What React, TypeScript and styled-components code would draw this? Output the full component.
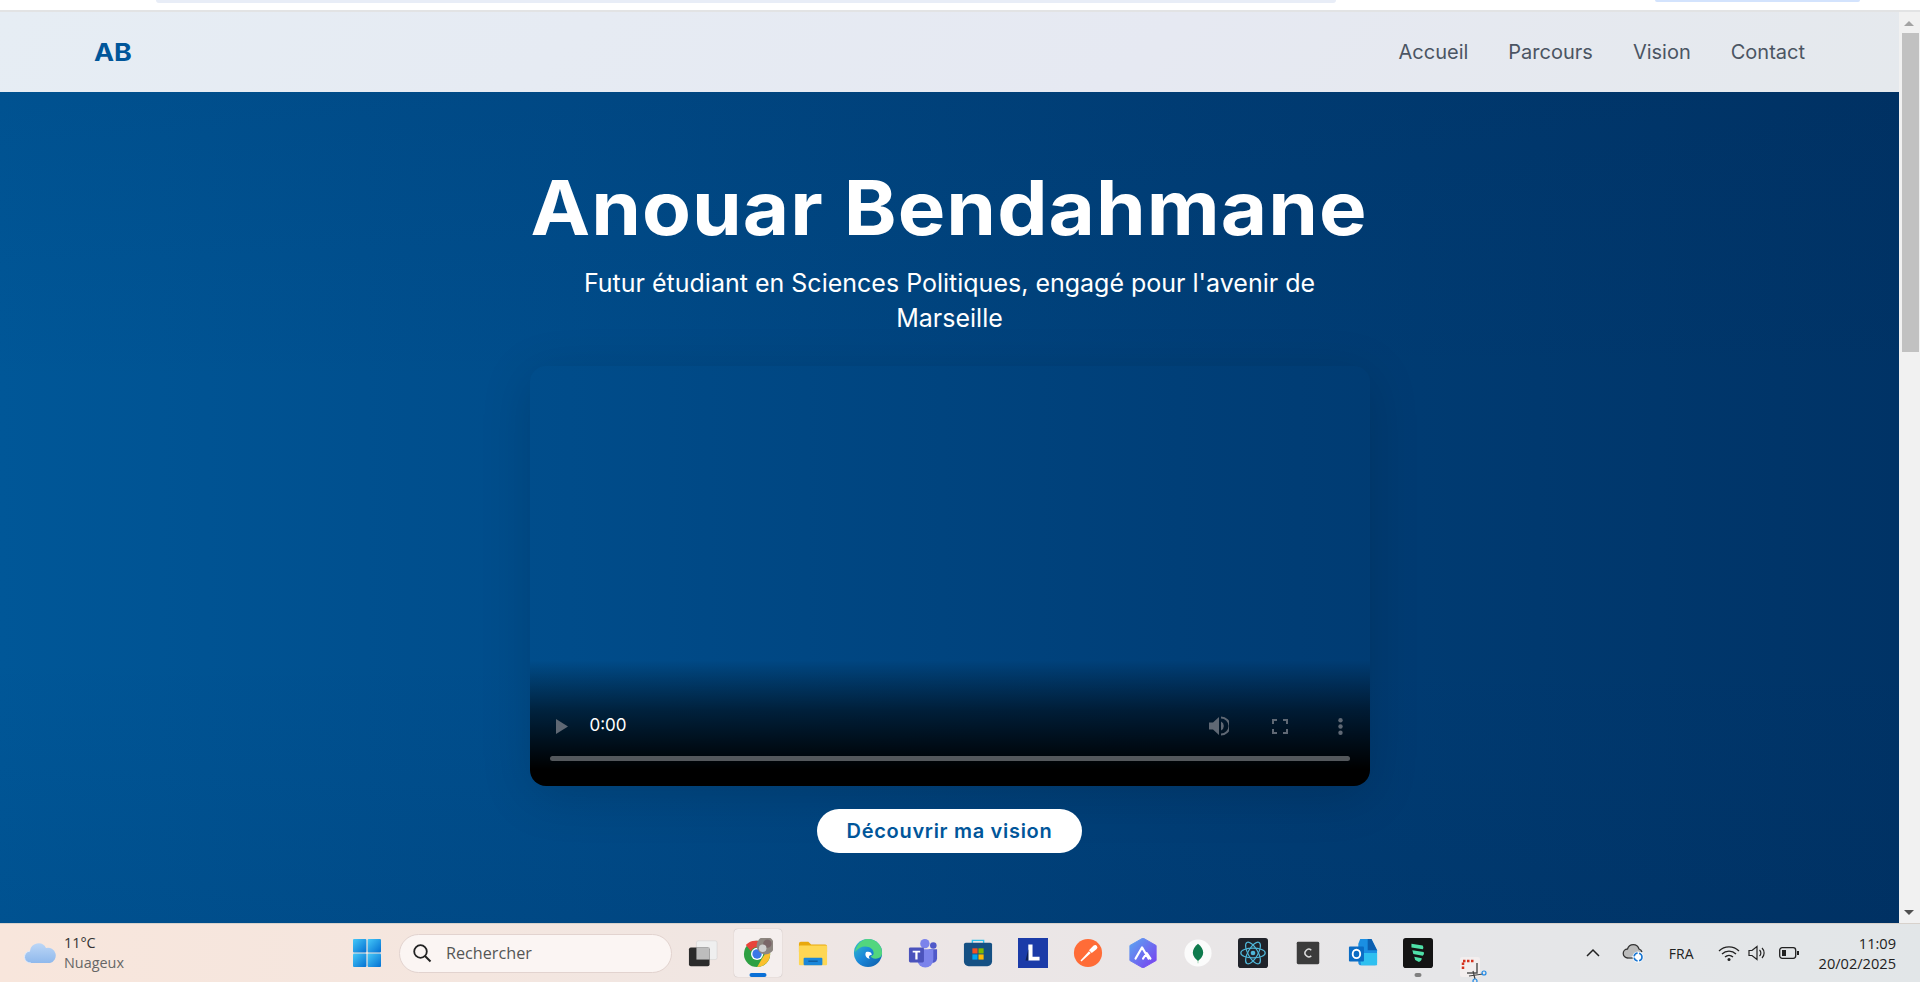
import React from "react";
import styled, { createGlobalStyle } from "styled-components";

const Global = createGlobalStyle`
  html, body { margin: 0; padding: 0; height: 982px; overflow: hidden; background: #fff; }
  #root { height: 982px; }
  * { box-sizing: border-box; }
`;

const Screen = styled.div`
  width: 1920px; height: 982px; display: flex; flex-direction: column; overflow: hidden;
  font-family: Inter, "Liberation Sans", sans-serif;
`;
const ChromeStrip = styled.div`
  height: 12px; flex: none; background: #fff; border-bottom: 2px solid #e2e3e4;
  display: flex; padding-left: 156px; align-items: flex-start;
`;
const Omnibox = styled.div`
  width: 1180px; height: 3px; background: #e8edf7; border-radius: 0 0 12px 12px;
`;
const ChromeChip = styled.div`
  width: 205px; height: 2px; margin-left: 319px; background: #d3e3fd; border-radius: 0 0 10px 10px;
`;
const Viewport = styled.div`
  flex: 1; display: flex; min-height: 0;
`;
const Page = styled.div`
  flex: 1; display: flex; flex-direction: column; min-width: 0;
`;
const Nav = styled.nav`
  height: 80px; flex: none; display: flex; align-items: center; justify-content: space-between;
  padding: 0 94px; background: linear-gradient(135deg, #e6edf4, #e6e9f2 60%, #e5e9ed);
`;
const Logo = styled.div`
  font: 700 24px Inter, sans-serif; color: #00569a; transform: scaleX(1.12); transform-origin: left;
`;
const NavLinks = styled.div`
  display: flex; gap: 40px;
`;
const NavLink = styled.a`
  font-size: 20px; color: #4b5563; line-height: 24px;
`;
const Hero = styled.section`
  flex: 1; display: flex; flex-direction: column; align-items: center; color: #fff;
  background:
    linear-gradient(to bottom, rgba(0,30,70,.09), transparent 35%, transparent 68%, rgba(0,30,70,.09)),
    linear-gradient(90deg, #005798 0%, #004c8a 30%, #003f78 62%, #003366 100%);
  padding-top: 74px;
`;
const Title = styled.h1`
  margin: 0; font: 750 75px/84px Inter, sans-serif; letter-spacing: 1px; white-space: nowrap;
  transform: scaleX(1.065);
`;
const Subtitle = styled.p`
  margin: 16px 0 0; width: 800px; text-align: center; font-size: 25px; line-height: 35px; font-weight: 400;
`;
const VideoBox = styled.div`
  width: 840px; height: 420px; border-radius: 16px; position: relative;
  overflow: hidden;
  display: flex; flex-direction: column; justify-content: flex-end;
  background: linear-gradient(to bottom, transparent 0, transparent 70%, rgba(0,0,0,0.55) 82%, #000 96%, #000 100%);
`;
const VideoShadow = styled.div`
  width: 840px; flex: none; margin-top: 30px; border-radius: 16px; box-shadow: 0 10px 50px rgba(0,0,0,0.15);
`;
const Controls = styled.div`
  height: 40px; display: flex; align-items: center; padding: 0 27px 0 26px; color: #fff;
  margin-bottom: 40px;
`;
const Time = styled.span`
  font: 400 17px Inter, sans-serif; margin-left: 22px; flex: 1; transform: translateY(-1px);
`;
const CtrlIcon = styled.svg`
  display: block; flex: none;
`;
const VolumeGroup = styled.div`
  display: flex; align-items: center; gap: 43px; margin-right: 50px;
`;
const Track = styled.div`
  position: absolute; left: 20px; right: 20px; bottom: 25px; height: 5px; border-radius: 3px; background: #54585c;
`;
const Cta = styled.button`
  margin-top: 23px; width: 265px; height: 44px; border: 0; border-radius: 22px; background: #fff;
  color: #00569a; font: 600 20px Inter, sans-serif; letter-spacing: 0.7px; padding: 0;
`;
const Scrollbar = styled.div`
  width: 21px; flex: none; background: #f1f1f1; display: flex; flex-direction: column; align-items: center;
  position: relative;
`;
const Thumb = styled.div`
  width: 17px; height: 319px; background: #c1c1c1; margin-top: 21px; margin-left: 1px;
`;
const Arrow = styled.div<{ $down?: boolean }>`
  width: 0; height: 0; border-left: 5px solid transparent; border-right: 5px solid transparent;
  position: absolute; right: 6px;
  ${p => p.$down ? "bottom: 8px; border-top: 5px solid #505050;" : "top: 9px; border-bottom: 5px solid #a3a3a3;"}
`;
const Taskbar = styled.footer`
  height: 59px; flex: none; display: grid; grid-template-columns: 340px 1fr 400px; align-items: center;
  background: linear-gradient(90deg, #f8e6dc 0%, #f4e6df 25%, #ece6e6 50%, #e6e6e8 75%, #e2e6e8 100%);
  border-top: 1px solid #d8d2cc; font-family: "Open Sans", sans-serif; position: relative;
`;
const Weather = styled.div`
  display: flex; align-items: center; gap: 8px; padding-left: 24px;
`;
const WeatherText = styled.div`
  font-size: 14.4px; line-height: 20px; color: #333; font-family: "Open Sans", sans-serif;
`;
const WeatherSub = styled.div`
  color: #666;
`;
const Center = styled.div`
  display: flex; align-items: center; height: 100%;
  padding-left: 12px;
`;
const Search = styled.div`
  width: 273px; height: 39px; border-radius: 20px; background: #fbf5f3; border: 1px solid #e2d3cf;
  display: flex; align-items: center; gap: 14px; padding-left: 12px; font-size: 16.2px; color: #555; margin-left: 17px; margin-right: 3.5px;
`;
const AppSlot = styled.div<{ $active?: boolean }>`
  width: 48px; height: 48px; flex: none; margin: 0 3.5px; position: relative; display: flex; align-items: center; justify-content: center;
  border-radius: 4px;
  ${p => p.$active ? "background: #f5efee; box-shadow: 0 0 1px rgba(0,0,0,.3);" : ""}
`;
const Indicator = styled.div<{ $grey?: boolean }>`
  position: absolute; bottom: 0; left: 50%; transform: translateX(-50%);
  height: 4px; border-radius: 2px; width: ${p => p.$grey ? "7px" : "17px"}; background: ${p => p.$grey ? "#808080" : "#0a6fd6"};
`;
const Snip = styled.div`
  position: absolute; left: 1459px; top: 33px; width: 28px; height: 26px;
`;
const Tray = styled.div`
  display: flex; align-items: center; justify-content: flex-end; padding-right: 24px; color: #222; height: 100%; font-size: 13.5px;
`;
const Lang = styled.span`
  margin: 0 24px 0 23px; font-size: 14px;
`;
const Clock = styled.div`
  text-align: right; line-height: 20px; font-size: 14.6px; margin-left: 20px; color: #222;
`;

const AppIcon: React.FC<{ children: React.ReactNode }> = ({ children }) => (
  <svg width="30" height="30" viewBox="0 0 32 32">{children}</svg>
);

export default function App() {
  return (
    <Screen>
      <Global />
      <ChromeStrip><Omnibox /><ChromeChip /></ChromeStrip>
      <Viewport>
        <Page>
          <Nav>
            <Logo>AB</Logo>
            <NavLinks>
              <NavLink>Accueil</NavLink>
              <NavLink>Parcours</NavLink>
              <NavLink>Vision</NavLink>
              <NavLink>Contact</NavLink>
            </NavLinks>
          </Nav>
          <Hero>
            <Title>Anouar Bendahmane</Title>
            <Subtitle>Futur étudiant en Sciences Politiques, engagé pour l'avenir de Marseille</Subtitle>
            <VideoShadow>
              <VideoBox>
                <Controls>
                  <CtrlIcon width="12" height="15" viewBox="0 0 12 15"><path d="M0 0l12 7.500L0 15z" fill="#5f6874" /></CtrlIcon>
                  <Time>0:00</Time>
                  <VolumeGroup>
                    <CtrlIcon width="20" height="20" viewBox="0 0 20 20"><path d="M0 6.500h4L10 1v18l-6-5.500H0z" fill="#5f6874" /><path d="M12 5.500a5 5 0 0 1 0 9zM12 .5a9.500 9.500 0 0 1 0 19v-2a7.500 7.500 0 0 0 0-15z" fill="#5f6874" /></CtrlIcon>
                    <CtrlIcon width="16" height="15" viewBox="0 0 16 15"><path d="M1 5V1h4M11 1h4v4M15 10v4h-4M5 14H1v-4" fill="none" stroke="#5f6874" strokeWidth="2" /></CtrlIcon>
                  </VolumeGroup>
                  <CtrlIcon width="5" height="17" viewBox="0 0 5 17"><circle cx="2.500" cy="2.200" r="2.200" fill="#5f6874" /><circle cx="2.500" cy="8.500" r="2.200" fill="#5f6874" /><circle cx="2.500" cy="14.800" r="2.200" fill="#5f6874" /></CtrlIcon>
                </Controls>
                <Track />
              </VideoBox>
            </VideoShadow>
            <Cta>Découvrir ma vision</Cta>
          </Hero>
        </Page>
        <Scrollbar>
          <Arrow />
          <Thumb />
          <Arrow $down />
        </Scrollbar>
      </Viewport>
      <Taskbar>
        <Weather>
          <svg width="32" height="26" viewBox="0 0 32 26">
            <defs><linearGradient id="cl" x1="0" y1="0" x2="0" y2="1"><stop offset="0" stopColor="#bcd6f6" /><stop offset="1" stopColor="#8fb9ec" /></linearGradient></defs>
            <path d="M7 23a6 6 0 0 1-1-12 8.500 8.500 0 0 1 16-3 7.500 7.500 0 0 1 4 15z" fill="url(#cl)" />
            <path d="M7 23a6 6 0 0 1-1-12" fill="none" stroke="#dfeafb" strokeWidth="1" />
          </svg>
          <WeatherText>11°C<WeatherSub>Nuageux</WeatherSub></WeatherText>
        </Weather>
        <Center>
          <svg width="30" height="30" viewBox="0 0 30 30">
            <defs><linearGradient id="w" x1="0" y1="0" x2="1" y2="1"><stop offset="0" stopColor="#45c8f8" /><stop offset="1" stopColor="#0470d2" /></linearGradient></defs>
            <rect x="1" y="1" width="13.400" height="13.400" rx="1" fill="url(#w)" /><rect x="15.600" y="1" width="13.400" height="13.400" rx="1" fill="url(#w)" />
            <rect x="1" y="15.600" width="13.400" height="13.400" rx="1" fill="url(#w)" /><rect x="15.600" y="15.600" width="13.400" height="13.400" rx="1" fill="url(#w)" />
          </svg>
          <Search>
            <svg width="20" height="20" viewBox="0 0 20 20"><circle cx="8.500" cy="8.500" r="6.300" fill="none" stroke="#222" strokeWidth="1.800" /><path d="M13 13l5.500 5.500" stroke="#222" strokeWidth="2" /></svg>
            Rechercher
          </Search>
          <AppSlot>
            <AppIcon>
              <rect x="9" y="3" width="22" height="20" rx="2" fill="#efefef" stroke="#ccc" strokeWidth=".5" />
              <rect x="1" y="10" width="22" height="20" rx="2" fill="#2b2b2b" />
              <rect x="9" y="10" width="14" height="13" fill="#bdbdbd" />
            </AppIcon>
          </AppSlot>
          <AppSlot $active>
            <AppIcon>
              <circle cx="15" cy="17" r="14" fill="#2ea043" />
              <path d="M15 3a14 14 0 0 1 12.100 7H15a7 7 0 0 0-6.500 4L3 7.500A14 14 0 0 1 15 3z" fill="#e8443a" />
              <path d="M27.100 10a14 14 0 0 1-12 21l6-10.500a7 7 0 0 0 0-10.500z" fill="#fbc02d" />
              <circle cx="15" cy="17" r="6.500" fill="#fff" /><circle cx="15" cy="17" r="5" fill="#3b78e7" />
              <circle cx="24" cy="8" r="9.500" fill="#8d8680" /><circle cx="26" cy="6" r="4.500" fill="#7a6668" /><circle cx="21" cy="11" r="4" fill="#cfcfcf" />
            </AppIcon>
            <Indicator />
          </AppSlot>
          <AppSlot>
            <AppIcon>
              <path d="M1 6a2 2 0 0 1 2-2h8l3 3h15a2 2 0 0 1 2 2v6H1z" fill="#e8a80c" />
              <rect x="1" y="8" width="30" height="21" rx="1" fill="#fed754" />
              <rect x="6" y="21" width="20" height="8" rx="1" fill="#1a86d9" /><rect x="11" y="24" width="10" height="1.500" fill="#0f5da0" />
            </AppIcon>
          </AppSlot>
          <AppSlot>
            <AppIcon>
              <defs><linearGradient id="e" x1="0" y1="0" x2="1" y2="1"><stop offset="0" stopColor="#36c5c8" /><stop offset=".5" stopColor="#1a86d9" /><stop offset="1" stopColor="#0c5aa6" /></linearGradient></defs>
              <circle cx="16" cy="16" r="15" fill="url(#e)" />
              <path d="M16 1a15 15 0 0 1 15 15c0 4-3 6-7 6-3 0-5-1-5-3 2 0 3-1 3-3 0-4-4-7-9-7-4 0-8 2-11 6C4 7 9 1 16 1z" fill="#52d67f" />
              <path d="M14 15c3-1 6 0 6 3-3 0-4 2-2 4-4 0-6-4-4-7z" fill="#fff" />
            </AppIcon>
          </AppSlot>
          <AppSlot>
            <AppIcon>
              <circle cx="18" cy="6" r="5" fill="#7b83eb" /><circle cx="27" cy="8" r="3.500" fill="#5059c9" />
              <path d="M22 12h9v10a5 5 0 0 1-7 4z" fill="#5059c9" /><path d="M10 12h17v11a8 8 0 0 1-17 0z" fill="#7b83eb" />
              <rect x="1" y="10" width="16" height="16" rx="1.500" fill="#4b53bc" />
              <path d="M5 13.500h8v2H10.200V23H7.800v-7.500H5z" fill="#fff" />
            </AppIcon>
          </AppSlot>
          <AppSlot>
            <AppIcon>
              <path d="M10 6V2.500h12V6" fill="none" stroke="#2fc4ee" strokeWidth="1.500" />
              <path d="M1 7a2 2 0 0 1 2-2h26a2 2 0 0 1 2 2v18a5 5 0 0 1-5 5H6a5 5 0 0 1-5-5z" fill="#155083" />
              <rect x="10" y="11" width="5.500" height="5.500" fill="#f25022" /><rect x="16.500" y="11" width="5.500" height="5.500" fill="#7fba00" />
              <rect x="10" y="17.500" width="5.500" height="5.500" fill="#00a4ef" /><rect x="16.500" y="17.500" width="5.500" height="5.500" fill="#ffb900" />
            </AppIcon>
          </AppSlot>
          <AppSlot>
            <AppIcon>
              <rect x="0" y="0" width="32" height="32" fill="#1b3ba8" />
              <path d="M11 24V7h4.500v13H23v4z" fill="#fff" /><path d="M11 24V12l-3 12z" fill="#0e2054" />
            </AppIcon>
          </AppSlot>
          <AppSlot>
            <AppIcon>
              <circle cx="16" cy="16" r="15" fill="#ff6c37" />
              <path d="M8 24l9-10 2 2-10 9zM17 13l5-5a2.500 2.500 0 0 1 3 4l-5 4z" fill="#fff" />
            </AppIcon>
          </AppSlot>
          <AppSlot>
            <AppIcon>
              <defs><linearGradient id="m" x1="0" y1="0" x2="1" y2="1"><stop offset="0" stopColor="#5ba8f0" /><stop offset="1" stopColor="#7a3cf0" /></linearGradient></defs>
              <path d="M16 0l14 8v16l-14 8-14-8V8z" fill="url(#m)" stroke="url(#m)" strokeWidth="1" strokeLinejoin="round" />
              <path d="M8 22l7-12 7 12M16 22l4-6 4 6" fill="none" stroke="#fff" strokeWidth="2.200" strokeLinecap="round" strokeLinejoin="round" />
            </AppIcon>
          </AppSlot>
          <AppSlot>
            <AppIcon>
              <circle cx="16" cy="16" r="14.500" fill="#fbfbfb" />
              <path d="M16 6c3.500 3 5.500 6 5.500 9.500 0 4-3 7-5.500 9-2.500-2-5.500-5-5.500-9C10.500 12 12.500 9 16 6z" fill="#0f7a4d" />
              <path d="M15.700 24h.6v3h-.6z" fill="#6b8" />
            </AppIcon>
          </AppSlot>
          <AppSlot>
            <AppIcon>
              <rect x="0" y="0" width="32" height="32" rx="3" fill="#20232a" />
              <g fill="none" stroke="#4fb6d8" strokeWidth="1.300">
                <ellipse cx="16" cy="16" rx="13" ry="5.200" /><ellipse cx="16" cy="16" rx="13" ry="5.200" transform="rotate(60 16 16)" /><ellipse cx="16" cy="16" rx="13" ry="5.200" transform="rotate(120 16 16)" />
              </g>
              <circle cx="16" cy="16" r="2.500" fill="#4fb6d8" />
            </AppIcon>
          </AppSlot>
          <AppSlot>
            <AppIcon>
              <rect x="4" y="4" width="24" height="24" rx="1.500" fill="#3c3c3c" />
              <path d="M19.500 13a4 4 0 1 0 0 6" fill="none" stroke="#ddd" strokeWidth="1.600" />
            </AppIcon>
          </AppSlot>
          <AppSlot>
            <AppIcon>
              <path d="M13 1h12l6 12v13a3 3 0 0 1-3 3H14a3 3 0 0 1-3-3V6z" fill="#1a8fe3" />
              <path d="M21 1h4l6 12H21z" fill="#0b5fb0" /><path d="M12 16h19v13H14z" fill="#2fc0f0" />
              <rect x="1" y="9" width="16" height="16" rx="1" fill="#0b6cc4" />
              <ellipse cx="9" cy="17" rx="4" ry="4.500" fill="none" stroke="#fff" strokeWidth="2" />
            </AppIcon>
          </AppSlot>
          <AppSlot>
            <AppIcon>
              <rect x="0" y="0" width="32" height="32" rx="3" fill="#141414" />
              <g fill="#4fe0a8">
                <path d="M9 6l12 2c1 2 1 3 0 4L9 10zM10 13l12 2c1 2 0 3-1 4l-10-2zM12 20l8 1.500c0 2-1 3-3 4l-4-2z" />
              </g>
            </AppIcon>
            <Indicator $grey />
          </AppSlot>
        </Center>
        <Tray>
          <svg width="16" height="10" viewBox="0 0 16 10"><path d="M2 8l6-6 6 6" fill="none" stroke="#222" strokeWidth="1.500" /></svg>
          <svg width="24" height="20" viewBox="0 0 24 20" style={{ marginLeft: 21 }}>
            <path d="M6 15a4.500 4.500 0 0 1-.5-9 6 6 0 0 1 11.500 0 4.500 4.500 0 0 1 3 3" fill="#bbb" stroke="#333" strokeWidth="1.300" />
            <path d="M6 15h7" stroke="#333" strokeWidth="1.300" />
            <circle cx="16" cy="14" r="5.500" fill="#fff" /><circle cx="16" cy="14" r="4" fill="none" stroke="#1976d2" strokeWidth="1.600" strokeDasharray="5 1.500" />
          </svg>
          <Lang>FRA</Lang>
          <svg width="22" height="16" viewBox="0 0 22 16"><g fill="none" stroke="#222" strokeWidth="1.300"><path d="M1 6a14 14 0 0 1 20 0" /><path d="M4 9a10 10 0 0 1 14 0" /><path d="M7 12a6 6 0 0 1 8 0" /></g><circle cx="11" cy="14.500" r="1.500" fill="#222" /></svg>
          <svg width="20" height="16" viewBox="0 0 20 16" style={{ marginLeft: 8 }}><path d="M1 5.500h3l5-4v13l-5-4H1z" fill="none" stroke="#222" strokeWidth="1.200" /><path d="M11.500 5a4 4 0 0 1 0 6M14 3a7 7 0 0 1 0 10" fill="none" stroke="#222" strokeWidth="1.200" /></svg>
          <svg width="20" height="12" viewBox="0 0 20 12" style={{ marginLeft: 11 }}><rect x=".7" y=".7" width="16" height="10.600" rx="2.500" fill="none" stroke="#222" strokeWidth="1.300" /><rect x="3" y="3" width="4" height="6" fill="#222" /><rect x="18" y="4" width="2" height="4" fill="#222" /></svg>
          <Clock>11:09<br />20/02/2025</Clock>
        </Tray>
        <Snip>
          <svg width="28" height="26" viewBox="0 0 28 26">
            <rect x="1" y="0" width="20" height="20" rx="2" fill="#f3eeee" />
            <path d="M4 12V4h12" fill="none" stroke="#d6331f" strokeWidth="2.500" strokeDasharray="2.500 1.500" />
            <path d="M8 16h10V6" fill="none" stroke="#555" strokeWidth="1.500" />
            <path d="M10 19l14-2M14 14l2 8" stroke="#444" strokeWidth="1.200" />
            <circle cx="25" cy="16" r="2" fill="none" stroke="#1e88e5" strokeWidth="1.200" /><circle cx="16" cy="24" r="2" fill="none" stroke="#1e88e5" strokeWidth="1.200" />
          </svg>
        </Snip>
      </Taskbar>
    </Screen>
  );
}
